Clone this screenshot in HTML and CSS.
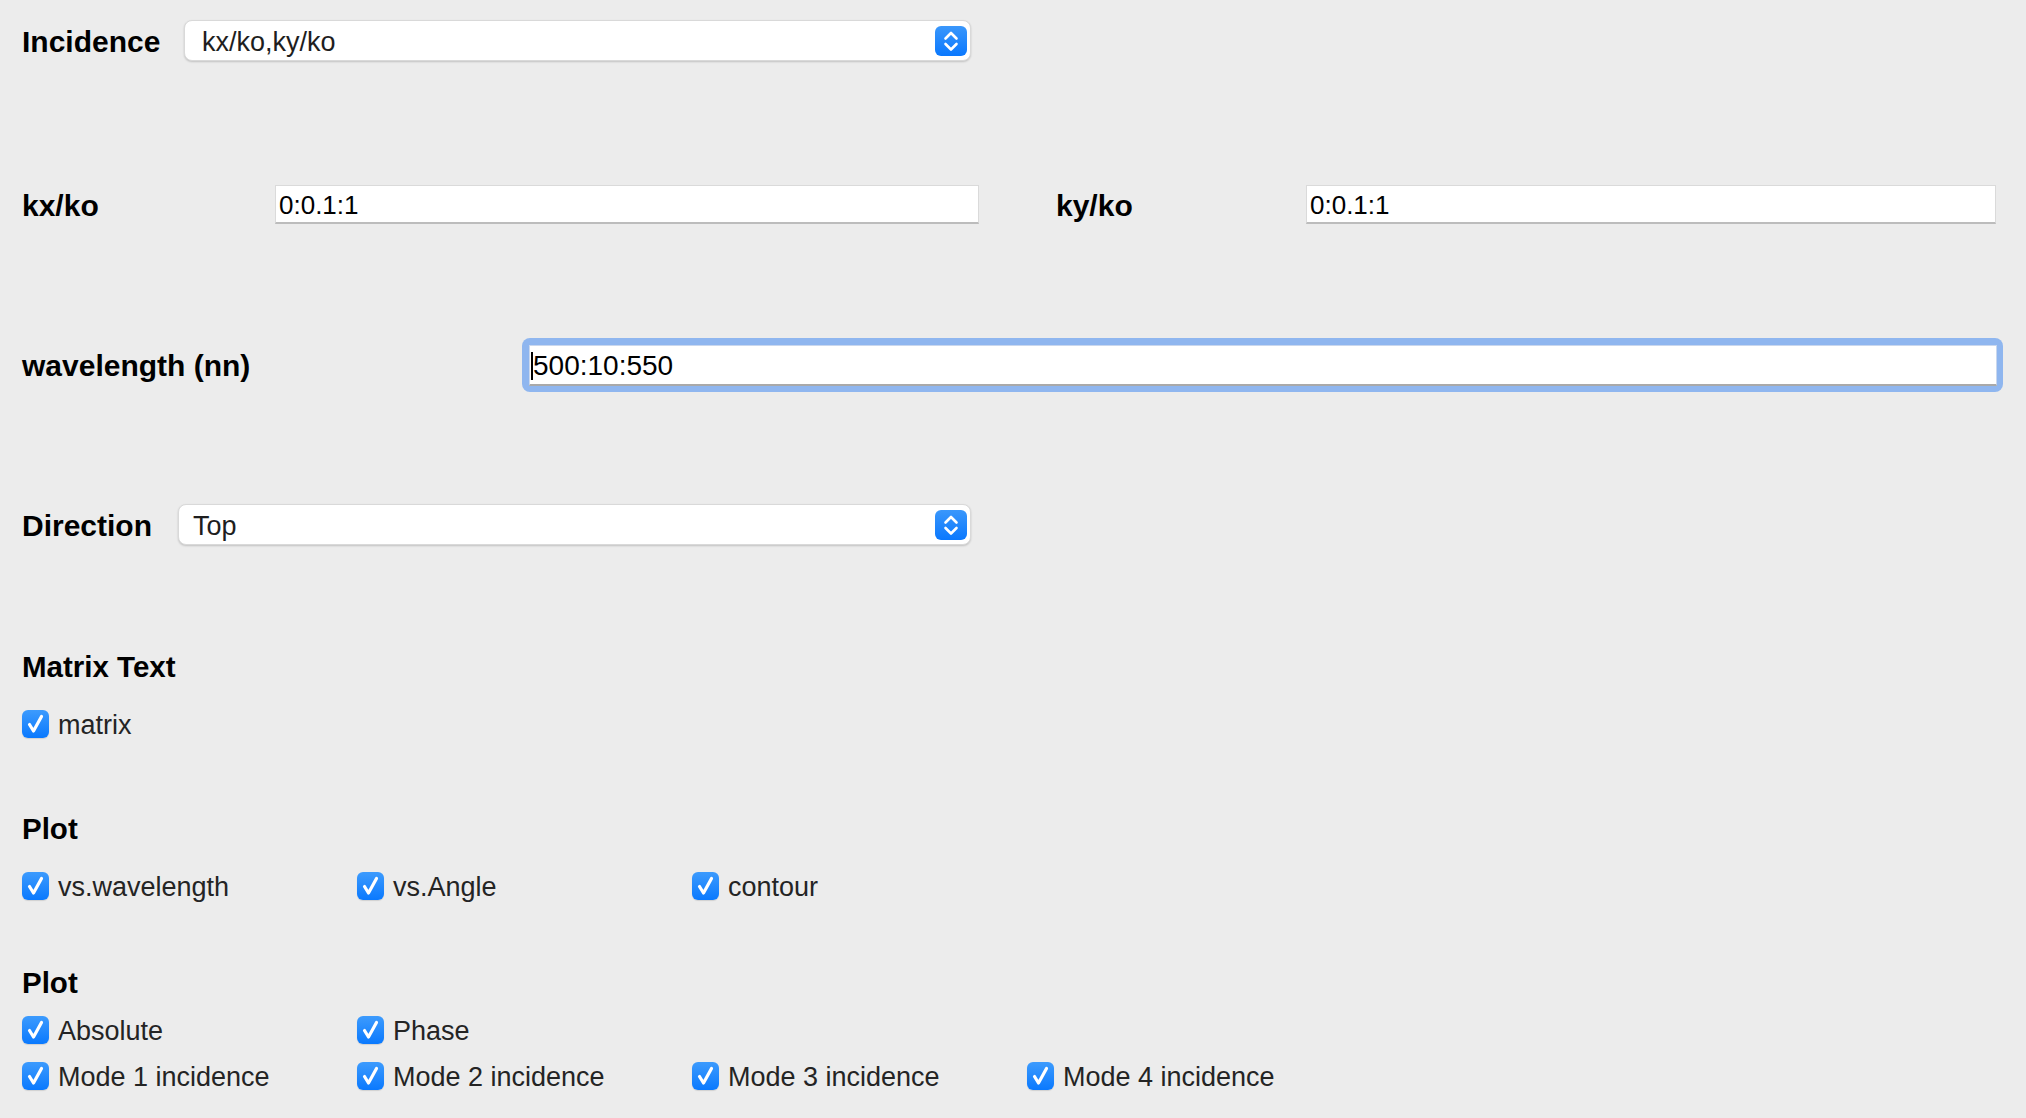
FILE: index.html
```html
<!DOCTYPE html>
<html lang="en">
<head>
<meta charset="utf-8">
<title>Settings</title>
<link rel="stylesheet" href="styles.css">
</head>
<body>
<div class="panel">
  <div class="row row-incidence">
    <div class="label label-incidence">Incidence</div>
    <div class="select select-incidence">
      <span class="select-text">kx/ko,ky/ko</span>
      <span class="stepper"><svg width="32" height="30" viewBox="0 0 32 30"><path d="M10.5 12.5 L16 7 L21.5 12.5 M10.5 18 L16 23.5 L21.5 18" fill="none" stroke="#fff" stroke-width="2.6" stroke-linecap="round" stroke-linejoin="round"/></svg></span>
    </div>
  </div>

  <div class="row row-k">
    <div class="label label-kx">kx/ko</div>
    <div class="field field-kx">0:0.1:1</div>
    <div class="label label-ky">ky/ko</div>
    <div class="field field-ky">0:0.1:1</div>
  </div>

  <div class="row row-wave">
    <div class="label label-wave">wavelength (nn)</div>
    <div class="focus-ring">
      <div class="field field-wave"><span class="caret"></span>500:10:550</div>
    </div>
  </div>

  <div class="row row-direction">
    <div class="label label-direction">Direction</div>
    <div class="select select-direction">
      <span class="select-text">Top</span>
      <span class="stepper"><svg width="32" height="30" viewBox="0 0 32 30"><path d="M10.5 12.5 L16 7 L21.5 12.5 M10.5 18 L16 23.5 L21.5 18" fill="none" stroke="#fff" stroke-width="2.6" stroke-linecap="round" stroke-linejoin="round"/></svg></span>
    </div>
  </div>

  <h2 class="heading heading-matrix">Matrix Text</h2>
  <div class="checks checks-matrix">
    <label class="check"><span class="box"><svg width="27" height="28" viewBox="0 0 27 28"><path d="M7.5 14.5 L11.5 21 L19.5 6.5" fill="none" stroke="#fff" stroke-width="3.2" stroke-linecap="round" stroke-linejoin="round"/></svg></span><span class="check-text">matrix</span></label>
  </div>

  <h2 class="heading heading-plot1">Plot</h2>
  <div class="checks checks-plot1">
    <label class="check"><span class="box"><svg width="27" height="28" viewBox="0 0 27 28"><path d="M7.5 14.5 L11.5 21 L19.5 6.5" fill="none" stroke="#fff" stroke-width="3.2" stroke-linecap="round" stroke-linejoin="round"/></svg></span><span class="check-text">vs.wavelength</span></label>
    <label class="check"><span class="box"><svg width="27" height="28" viewBox="0 0 27 28"><path d="M7.5 14.5 L11.5 21 L19.5 6.5" fill="none" stroke="#fff" stroke-width="3.2" stroke-linecap="round" stroke-linejoin="round"/></svg></span><span class="check-text">vs.Angle</span></label>
    <label class="check"><span class="box"><svg width="27" height="28" viewBox="0 0 27 28"><path d="M7.5 14.5 L11.5 21 L19.5 6.5" fill="none" stroke="#fff" stroke-width="3.2" stroke-linecap="round" stroke-linejoin="round"/></svg></span><span class="check-text">contour</span></label>
  </div>

  <h2 class="heading heading-plot2">Plot</h2>
  <div class="checks checks-abs">
    <label class="check"><span class="box"><svg width="27" height="28" viewBox="0 0 27 28"><path d="M7.5 14.5 L11.5 21 L19.5 6.5" fill="none" stroke="#fff" stroke-width="3.2" stroke-linecap="round" stroke-linejoin="round"/></svg></span><span class="check-text">Absolute</span></label>
    <label class="check"><span class="box"><svg width="27" height="28" viewBox="0 0 27 28"><path d="M7.5 14.5 L11.5 21 L19.5 6.5" fill="none" stroke="#fff" stroke-width="3.2" stroke-linecap="round" stroke-linejoin="round"/></svg></span><span class="check-text">Phase</span></label>
  </div>
  <div class="checks checks-mode">
    <label class="check"><span class="box"><svg width="27" height="28" viewBox="0 0 27 28"><path d="M7.5 14.5 L11.5 21 L19.5 6.5" fill="none" stroke="#fff" stroke-width="3.2" stroke-linecap="round" stroke-linejoin="round"/></svg></span><span class="check-text">Mode 1 incidence</span></label>
    <label class="check"><span class="box"><svg width="27" height="28" viewBox="0 0 27 28"><path d="M7.5 14.5 L11.5 21 L19.5 6.5" fill="none" stroke="#fff" stroke-width="3.2" stroke-linecap="round" stroke-linejoin="round"/></svg></span><span class="check-text">Mode 2 incidence</span></label>
    <label class="check"><span class="box"><svg width="27" height="28" viewBox="0 0 27 28"><path d="M7.5 14.5 L11.5 21 L19.5 6.5" fill="none" stroke="#fff" stroke-width="3.2" stroke-linecap="round" stroke-linejoin="round"/></svg></span><span class="check-text">Mode 3 incidence</span></label>
    <label class="check"><span class="box"><svg width="27" height="28" viewBox="0 0 27 28"><path d="M7.5 14.5 L11.5 21 L19.5 6.5" fill="none" stroke="#fff" stroke-width="3.2" stroke-linecap="round" stroke-linejoin="round"/></svg></span><span class="check-text">Mode 4 incidence</span></label>
  </div>
</div>
</body>
</html>
```

FILE: styles.css
```css
html, body {
  margin: 0;
  padding: 0;
  background: #ececec;
}
body {
  font-family: "Liberation Sans", Arial, sans-serif;
  color: #000;
  width: 2026px;
  height: 1118px;
  overflow: hidden;
}
.panel {
  padding: 20px 0 0 22px;
}
.row {
  display: flex;
  align-items: center;
}
.label {
  font-weight: bold;
  font-size: 30px;
  line-height: 34px;
  padding-top: 2px;
  color: #000;
  flex: none;
}
.row-incidence { height: 41px; }
.label-incidence { width: 162px; }
.label-direction { width: 156px; }

.select {
  flex: none;
  box-sizing: border-box;
  width: 787px;
  height: 41px;
  background: #fff;
  border-radius: 8px;
  border: 1px solid #d9d9d9;
  box-shadow: 0 1px 2px rgba(0,0,0,0.18);
  display: flex;
  align-items: center;
  justify-content: space-between;
  padding: 0 3px 0 17px;
}
.select-direction { width: 793px; padding-left: 14px; }
.select-text {
  font-size: 27px;
  color: #1e1e1e;
  line-height: 30px;
  padding-top: 2px;
}
.stepper {
  width: 32px;
  height: 30px;
  border-radius: 6px;
  background: linear-gradient(#3a97fb, #0a78fe);
  display: flex;
}

.row-k {
  margin-top: 124px;
  height: 39px;
}
.label-kx { width: 253px; }
.label-ky { width: 250px; margin-left: 77px; }
.field {
  flex: none;
  box-sizing: border-box;
  height: 39px;
  background: #fff;
  border: 1px solid #dadada;
  border-bottom: 2px solid #bcbcbc;
  font-size: 26px;
  line-height: 38px;
  color: #000;
  padding-left: 3px;
  white-space: nowrap;
}
.field-kx { width: 704px; }
.field-ky { width: 690px; }

.row-wave {
  margin-top: 114px;
  height: 54px;
}
.label-wave { width: 500px; }
.focus-ring {
  flex: none;
  width: 1481px;
  height: 54px;
  box-sizing: border-box;
  padding: 7px 6px 6px 7px;
  background: #8fb6ef;
  border-radius: 8px;
}
.field-wave {
  width: 100%;
  height: 41px;
  font-size: 28px;
  line-height: 40px;
  padding-left: 1px;
  border-color: #c9d7ee;
  border-bottom-color: #a9a9a9;
}
.caret {
  display: inline-block;
  width: 2px;
  height: 28px;
  background: #000;
  vertical-align: -5px;
}

.row-direction {
  margin-top: 112px;
  height: 41px;
}

.heading {
  margin: 0;
  font-size: 29.5px;
  line-height: 34px;
  font-weight: bold;
  color: #000;
  padding-top: 1px;
}
.heading-matrix { margin-top: 104px; }
.heading-plot1 { margin-top: 73px; }
.heading-plot2 { margin-top: 65px; }

.checks {
  display: grid;
  grid-template-columns: repeat(4, 335px);
  height: 28px;
}
.checks-matrix { margin-top: 26px; }
.checks-plot1 { margin-top: 26px; }
.checks-abs { margin-top: 16px; }
.checks-mode { margin-top: 18px; }

.check {
  display: flex;
  align-items: center;
  height: 28px;
}
.box {
  flex: none;
  width: 27px;
  height: 28px;
  border-radius: 6px;
  background: linear-gradient(#3d9bfd, #0a79fe);
  box-shadow: 0 1px 1px rgba(0,0,0,0.12);
  display: flex;
}
.check-text {
  margin-left: 9px;
  font-size: 27px;
  line-height: 30px;
  padding-top: 2px;
  color: #242424;
  white-space: nowrap;
}
```
